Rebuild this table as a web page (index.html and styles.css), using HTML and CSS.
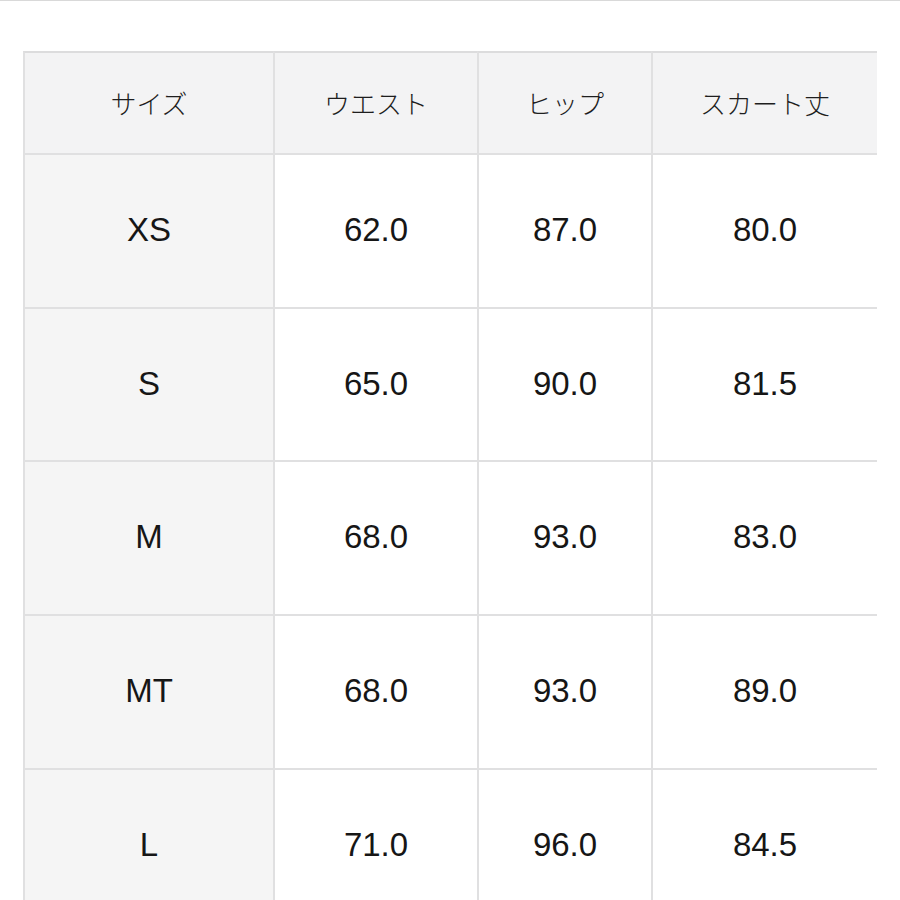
FILE: index.html
```html
<!DOCTYPE html>
<html lang="ja">
<head>
<meta charset="utf-8">
<title>サイズ表</title>
<link rel="stylesheet" href="styles.css">
</head>
<body>
<div class="page">
  <div class="size-table">
    <div class="cell head">サイズ</div>
    <div class="cell head">ウエスト</div>
    <div class="cell head">ヒップ</div>
    <div class="cell head">スカート丈</div>

    <div class="cell label">XS</div>
    <div class="cell">62.0</div>
    <div class="cell">87.0</div>
    <div class="cell">80.0</div>

    <div class="cell label">S</div>
    <div class="cell">65.0</div>
    <div class="cell">90.0</div>
    <div class="cell">81.5</div>

    <div class="cell label">M</div>
    <div class="cell">68.0</div>
    <div class="cell">93.0</div>
    <div class="cell">83.0</div>

    <div class="cell label">MT</div>
    <div class="cell">68.0</div>
    <div class="cell">93.0</div>
    <div class="cell">89.0</div>

    <div class="cell label">L</div>
    <div class="cell">71.0</div>
    <div class="cell">96.0</div>
    <div class="cell">84.5</div>
  </div>
</div>
</body>
</html>
```

FILE: styles.css
```css
html, body {
  margin: 0;
  padding: 0;
  background: #ffffff;
}
body {
  border-top: 1px solid #d9d9d9;
  height: 899px;
  overflow: hidden;
  font-family: "Liberation Sans", Arial, "Noto Sans CJK JP", sans-serif;
  color: #161616;
}
.page {
  padding: 50px 0 0 23px;
}
.size-table {
  display: grid;
  grid-template-columns: 250px 204px 174px 226px;
  grid-template-rows: 102px;
  grid-auto-rows: 153.7px;
}
.cell {
  box-sizing: border-box;
  border-top: 2px solid #e0e0e1;
  border-left: 2px solid #e0e0e1;
  display: flex;
  align-items: center;
  justify-content: center;
  font-size: 33px;
  padding-bottom: 2px;
  background: #ffffff;
}
.head {
  background: #f3f3f4;
  font-family: "Noto Sans CJK JP", "Noto Sans CJK SC", sans-serif;
  font-size: 26px;
  font-weight: 300;
  color: #1e1e1e;
  padding-bottom: 1px;
  border-top-color: #dcdcdd;
}
.label {
  background: #f5f5f5;
}
```
